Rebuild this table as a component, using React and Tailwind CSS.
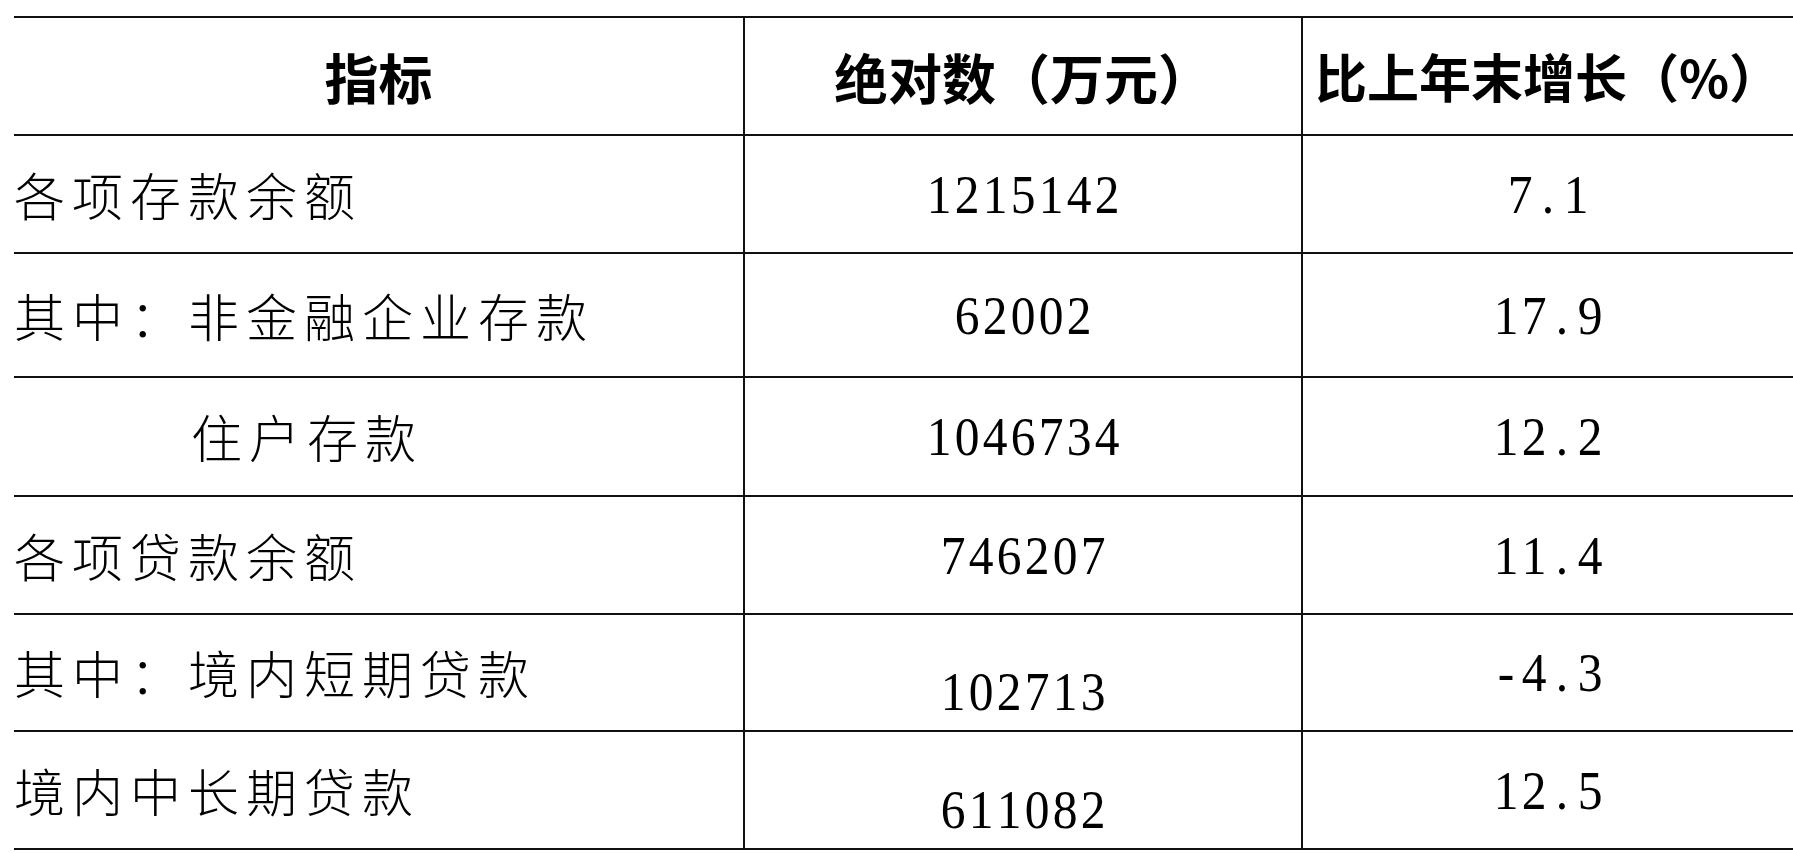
import React from "react";

const cjk = { fontFamily: '"Noto Sans CJK SC", "Noto Sans", sans-serif' };
const num = { fontFamily: '"Liberation Serif", "DejaVu Serif", serif' };

const rows = [
  { name: "各项存款余额", value: "1215142", rate: "7.1", h: "h-[118px]" },
  { name: "其中：非金融企业存款", value: "62002", rate: "17.9", h: "h-[124px]" },
  { name: "住户存款", value: "1046734", rate: "12.2", h: "h-[119px]", indent: true },
  { name: "各项贷款余额", value: "746207", rate: "11.4", h: "h-[118px]" },
  { name: "其中：境内短期贷款", value: "102713", rate: "-4.3", h: "h-[117px]", low: true },
  { name: "境内中长期贷款", value: "611082", rate: "12.5", h: "h-[118px]", low: true },
];

function Digits({ text }) {
  return (
    <span className="inline-flex text-[55px] leading-none text-black" style={num}>
      {text.split("").map((c, i) => (
        <span key={i} className="inline-block w-[28px] text-center scale-x-90">
          {c}
        </span>
      ))}
    </span>
  );
}

export default function App() {
  return (
    <div className="w-full h-[853px] bg-white pt-[16px] pl-[14px] overflow-hidden">
      <div className="border-t-2 border-[#111]">
        <div className="grid grid-cols-[729px_558px_1fr] h-[118px] border-b-2 border-[#111]">
          <div className="flex items-center justify-center text-[54px] font-bold text-black" style={cjk}>
            指标
          </div>
          <div className="flex items-center justify-center border-l-2 border-[#111] text-[54px] font-bold text-black" style={cjk}>
            绝对数（万元）
          </div>
          <div className="flex items-center justify-center border-l-2 border-[#111] text-[52px] font-bold text-black whitespace-nowrap" style={cjk}>
            比上年末增长（%）
          </div>
        </div>

        {rows.map((r) => (
          <div key={r.name} className={`grid grid-cols-[729px_558px_1fr] border-b-2 border-[#111] ${r.h}`}>
            <div
              className={`flex items-center text-[51px] font-light tracking-[7px] text-black whitespace-nowrap ${r.indent ? "pl-[177px]" : ""}`}
              style={cjk}
            >
              {r.name}
            </div>
            <div className="flex items-center justify-center border-l-2 border-[#111]">
              <div className={r.low ? "mt-[38px]" : ""}>
                <Digits text={r.value} />
              </div>
            </div>
            <div className="flex items-center justify-center border-l-2 border-[#111]">
              <Digits text={r.rate} />
            </div>
          </div>
        ))}
      </div>
    </div>
  );
}
